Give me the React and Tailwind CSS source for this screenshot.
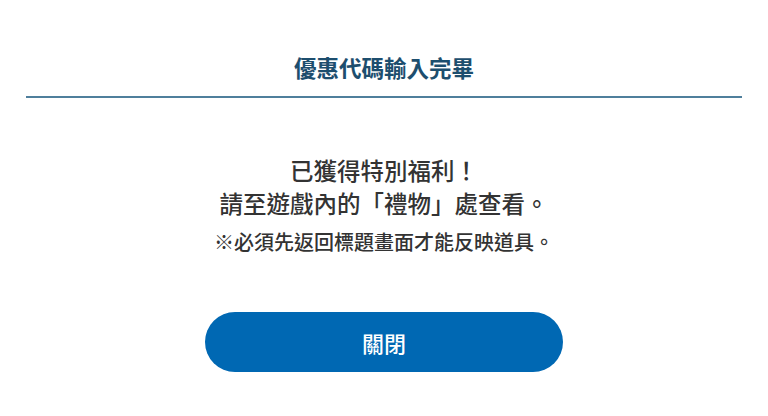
export default function App() {
  return (
    <div
      className="w-[768px] h-[416px] bg-white flex flex-col items-center"
      style={{ fontFamily: '"Noto Sans CJK TC", "Noto Sans", sans-serif' }}
    >
      <div className="w-full px-[26px]">
        <h1 className="pt-[52px] pb-[14px] text-center text-[22.5px] leading-[30px] font-bold text-[#1d4e6e]">
          優惠代碼輸入完畢
        </h1>
        <div className="h-[2px] bg-[#4f7f9c]" />
      </div>

      <div className="mt-[56px] text-center text-[#333333] font-medium">
        <p className="text-[23.5px] leading-[33px]">已獲得特別福利！</p>
        <p className="text-[23.5px] leading-[33px]">請至遊戲內的「禮物」處查看。</p>
        <p className="mt-[8px] text-[20px] leading-[28px]">※必須先返回標題畫面才能反映道具。</p>
      </div>

      <button className="mt-[56px] w-[358px] h-[60px] rounded-full bg-[#0068b3] text-white text-[22px] font-medium">
        關閉
      </button>
    </div>
  );
}
